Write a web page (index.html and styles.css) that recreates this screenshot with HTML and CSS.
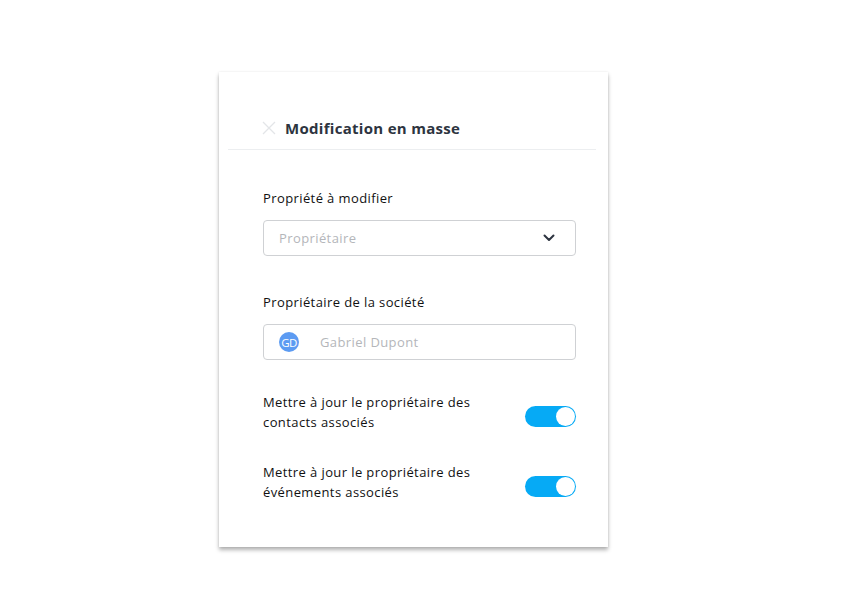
FILE: index.html
```html
<!DOCTYPE html>
<html lang="fr">
<head>
<meta charset="utf-8">
<title>Modification en masse</title>
<link rel="stylesheet" href="styles.css">
</head>
<body>
<div class="card">
  <div class="header">
    <svg class="close" width="14" height="14" viewBox="0 0 14 14"><path d="M1 1 L13 13 M13 1 L1 13" stroke="#e3e5e8" stroke-width="1.3" fill="none"/></svg>
    <h1 class="title">Modification en masse</h1>
  </div>
  <div class="divider"></div>
  <div class="body">
    <div class="field">
      <label class="label">Propriété à modifier</label>
      <div class="input select">
        <span class="placeholder">Propriétaire</span>
        <svg class="chevron" width="12" height="8" viewBox="0 0 12 8"><path d="M1.5 1.5 L6 6 L10.5 1.5" stroke="#2d3440" stroke-width="2" fill="none" stroke-linecap="round" stroke-linejoin="round"/></svg>
      </div>
    </div>
    <div class="field">
      <label class="label">Propriétaire de la société</label>
      <div class="input">
        <span class="avatar">GD</span>
        <span class="placeholder name">Gabriel Dupont</span>
      </div>
    </div>
    <div class="toggle-row first">
      <span class="toggle-text">Mettre à jour le propriétaire des contacts associés</span>
      <span class="toggle"><span class="knob"></span></span>
    </div>
    <div class="toggle-row">
      <span class="toggle-text">Mettre à jour le propriétaire des événements associés</span>
      <span class="toggle"><span class="knob"></span></span>
    </div>
  </div>
</div>
</body>
</html>
```
FILE: styles.css
```css
* { box-sizing: border-box; }
html, body { margin: 0; padding: 0; background: #fff; }
body {
  font-family: "Open Sans", "Liberation Sans", sans-serif;
  color: #111;
  min-height: 609px;
  padding-top: 72px;
}
.card {
  margin: 0 0 0 219px;
  width: 389px;
  height: 475px;
  background: #fff;
  box-shadow: 0 3px 4px rgba(0,0,0,0.3), 0 0 2px rgba(0,0,0,0.08);
}
.header {
  display: flex;
  align-items: center;
  height: 77px;
  padding: 44px 0 9px 43px;
}
.close { flex: none; margin-right: 9px; }
.title {
  margin: 0;
  font-size: 15px;
  font-weight: 700;
  color: #2d3440;
  line-height: 24px;
  letter-spacing: 0.3px;
}
.divider {
  height: 1px;
  background: #eceef0;
  margin: 0 12px 0 9px;
}
.body {
  padding: 38px 32px 0 44px;
}
.field { margin-bottom: 36px; }
.field + .field { margin-bottom: 32px; }
.label {
  display: block;
  font-size: 13px;
  line-height: 20px;
  letter-spacing: 0.4px;
  margin-bottom: 12px;
  color: #111;
}
.input {
  height: 36px;
  border: 1px solid #cfd1d4;
  border-radius: 4px;
  display: flex;
  align-items: center;
  padding: 0 15px;
}
.select { justify-content: space-between; padding-right: 20px; }
.placeholder {
  font-size: 13px;
  letter-spacing: 0.4px;
  color: #b4b6ba;
}
.avatar {
  width: 20px;
  height: 20px;
  border-radius: 50%;
  background: #5c9bf2;
  color: #fff;
  font-size: 11.5px;
  display: flex;
  align-items: center;
  justify-content: center;
  letter-spacing: -0.5px;
  margin-right: 21px;
}
.toggle-row {
  display: flex;
  justify-content: space-between;
  align-items: flex-end;
  margin-top: 30px;
}
.toggle-row.first { margin-top: 0; }
.toggle-text {
  width: 245px;
  font-size: 13px;
  line-height: 20px;
  letter-spacing: 0.4px;
  color: #111;
}
.toggle {
  width: 51px;
  height: 21px;
  border-radius: 11px;
  background: #06aaf5;
  display: flex;
  justify-content: flex-end;
  align-items: center;
  padding: 0 1px;
  margin-bottom: 5px;
}
.knob {
  width: 19px;
  height: 19px;
  border-radius: 50%;
  background: #fff;
}
```
